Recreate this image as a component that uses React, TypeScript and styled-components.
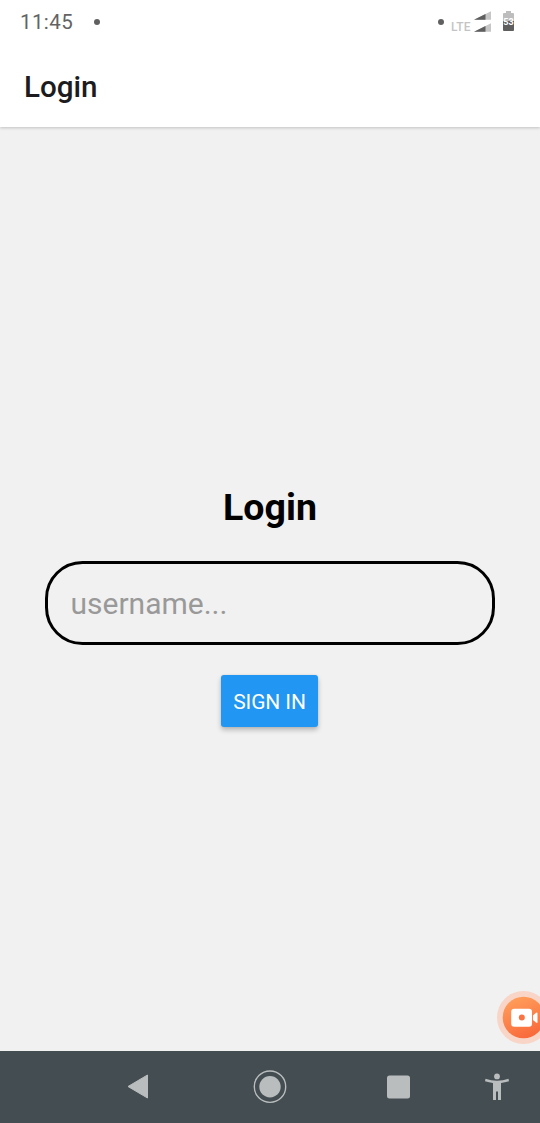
import React from "react";
import styled, { createGlobalStyle } from "styled-components";

const GlobalStyle = createGlobalStyle`
  *, *::before, *::after { box-sizing: border-box; }
  html, body { margin: 0; padding: 0; }
  body { font-family: Roboto, "Liberation Sans", sans-serif; background: #f1f1f1; overflow: hidden; }
`;

const Screen = styled.div`
  position: relative;
  display: flex;
  flex-direction: column;
  width: 540px;
  height: 1123px;
  overflow: hidden;
  background: #f1f1f1;
`;

const TopArea = styled.div`
  background: #fff;
  box-shadow: 0 1px 3px rgba(0, 0, 0, 0.2);
`;

const StatusBar = styled.div`
  display: flex;
  align-items: center;
  justify-content: space-between;
  height: 43px;
  padding: 0 26px 0 20px;
  color: #636363;
`;

const StatusGroup = styled.div`
  display: flex;
  align-items: center;
`;

const Clock = styled.span`
  font-size: 20.5px;
  line-height: 24px;
  letter-spacing: 0.4px;
`;

const Dot = styled.span<{ $gap: number }>`
  width: 6px;
  height: 6px;
  margin-left: ${({ $gap }) => $gap}px;
  border-radius: 50%;
  background: #606060;
`;

const Network = styled.span`
  width: 23px;
  margin: 11px 0 0 7px;
  font-size: 12px;
  line-height: 12px;
  font-weight: 500;
  letter-spacing: 0.2px;
  color: #c4c4c4;
`;

const BatterySlot = styled.span`
  display: flex;
  margin: 0 0 1px 12px;
`;

const Header = styled.header`
  display: flex;
  align-items: center;
  height: 84px;
  padding: 3px 24px 0;
`;

const HeaderTitle = styled.h1`
  margin: 0;
  font-size: 29.6px;
  line-height: 36px;
  font-weight: 500;
  color: #1c1c1e;
`;

const Main = styled.main`
  flex: 1;
  display: flex;
  flex-direction: column;
  align-items: center;
  justify-content: center;
  padding: 34px 45px 0;
`;

const Title = styled.h2`
  margin: 0 0 31px;
  font-size: 37.5px;
  line-height: 45px;
  font-weight: 700;
  color: #000;
`;

const UsernameInput = styled.input`
  width: 450px;
  height: 84px;
  margin-bottom: 30px;
  padding: 0 22.5px;
  border: 3px solid #000;
  border-radius: 37.5px;
  outline: none;
  background: transparent;
  font-family: inherit;
  font-size: 30px;
  color: #000;
  &::placeholder { color: #999; opacity: 1; }
`;

const SignInButton = styled.button`
  width: 97px;
  height: 52px;
  margin-right: 1px;
  padding: 2px 0 0;
  border: 0;
  border-radius: 3px;
  background: #2196f3;
  box-shadow: 0 3px 5px rgba(0, 0, 0, 0.24), 0 0 2px rgba(0, 0, 0, 0.1);
  font-family: inherit;
  font-size: 21px;
  letter-spacing: -0.1px;
  color: #fff;
  white-space: nowrap;
`;

const RecorderBubble = styled.div`
  position: absolute;
  left: 497px;
  top: 991px;
  width: 53px;
  height: 53px;
`;

const NavBar = styled.nav`
  display: grid;
  grid-template-columns: 72px 132px 131px 127px 70px 8px;
  align-items: center;
  height: 72px;
  background: #444d52;
`;

const NavItem = styled.div<{ $column: number }>`
  grid-column: ${({ $column }) => $column};
  display: flex;
  justify-content: center;
`;

const SignalIcon = () => (
  <svg width="17" height="21" viewBox="0 0 17 21">
    {[0, 12].map((y) => (
      <g key={y} transform={`translate(0 ${y})`}>
        <path d="M0 8.7 17 0.3V8.7Z" fill="#c6c6c6" />
        <path d="M0 8.7 11.5 3V8.7Z" fill="#5e5e5e" />
      </g>
    ))}
  </svg>
);

const BatteryIcon = () => (
  <svg width="11" height="20" viewBox="0 0 11 20">
    <path d="M3 0h5v2h2q1 0 1 1v8H0V3q0-1 1-1h2Z" fill="#bdbdbd" />
    <path d="M0 10h11v9q0 1-1 1H1q-1 0-1-1Z" fill="#5e5e5e" />
    <text x="5.5" y="13.5" textAnchor="middle" fontSize="9" fontWeight="700" fill="#fff">53</text>
  </svg>
);

const RecorderIcon = () => (
  <svg width="53" height="53" viewBox="0 0 53 53">
    <defs>
      <linearGradient id="bubble" x1="0.2" y1="0" x2="0.6" y2="1">
        <stop offset="0" stopColor="#ffa05c" />
        <stop offset="1" stopColor="#f9693b" />
      </linearGradient>
    </defs>
    <circle cx="26.5" cy="26.5" r="26.5" fill="#f8d5c6" />
    <circle cx="26.5" cy="26.5" r="20.8" fill="url(#bubble)" />
    <rect x="14.2" y="17.8" width="20.8" height="18" rx="3" fill="#fff" />
    <path d="M36 24.5 39 21.8Q40.500 20.800 40.500 22.500V31Q40.500 32.500 39 31.500L36 29Z" fill="#fff" />
    <circle cx="24.8" cy="26.6" r="3" fill="#fa7443" />
  </svg>
);

const BackIcon = () => (
  <svg width="22" height="26" viewBox="0 0 22 26">
    <path d="M20.500 1v23L1 12.5Z" fill="#babdbe" stroke="#babdbe" strokeWidth="1" strokeLinejoin="round" />
  </svg>
);

const HomeIcon = () => (
  <svg width="34" height="34" viewBox="0 0 34 34">
    <circle cx="17" cy="16.7" r="15.7" fill="none" stroke="#babdbe" strokeWidth="1.4" />
    <circle cx="17" cy="16.7" r="10.7" fill="#babdbe" />
  </svg>
);

const RecentIcon = () => (
  <svg width="23" height="24" viewBox="0 0 23 24">
    <rect y="0.5" width="23" height="23" rx="2.5" fill="#babdbe" />
  </svg>
);

const AccessibilityIcon = () => (
  <svg width="24" height="28" viewBox="0 0 24 28" fill="#babdbe">
    <circle cx="12" cy="3.4" r="2.9" />
    <path d="M0.5 5.7Q6 7.7 12 7.7T23.5 5.7L24 8.2Q20 9.5 16 10V27H13V18.5H11V27H8V10Q4 9.5 0 8.2Z" />
  </svg>
);

export default function App() {
  return (
    <>
      <GlobalStyle />
      <Screen>
        <TopArea>
          <StatusBar>
            <StatusGroup>
              <Clock>11:45</Clock>
              <Dot $gap={21} />
            </StatusGroup>
            <StatusGroup>
              <Dot $gap={0} />
              <Network>LTE</Network>
              <SignalIcon />
              <BatterySlot><BatteryIcon /></BatterySlot>
            </StatusGroup>
          </StatusBar>
          <Header>
            <HeaderTitle>Login</HeaderTitle>
          </Header>
        </TopArea>
        <Main>
          <Title>Login</Title>
          <UsernameInput type="text" placeholder="username..." aria-label="Username" />
          <SignInButton type="button">SIGN IN</SignInButton>
        </Main>
        <NavBar>
          <NavItem $column={2}><BackIcon /></NavItem>
          <NavItem $column={3}><HomeIcon /></NavItem>
          <NavItem $column={4}><RecentIcon /></NavItem>
          <NavItem $column={5}><AccessibilityIcon /></NavItem>
        </NavBar>
        <RecorderBubble><RecorderIcon /></RecorderBubble>
      </Screen>
    </>
  );
}
